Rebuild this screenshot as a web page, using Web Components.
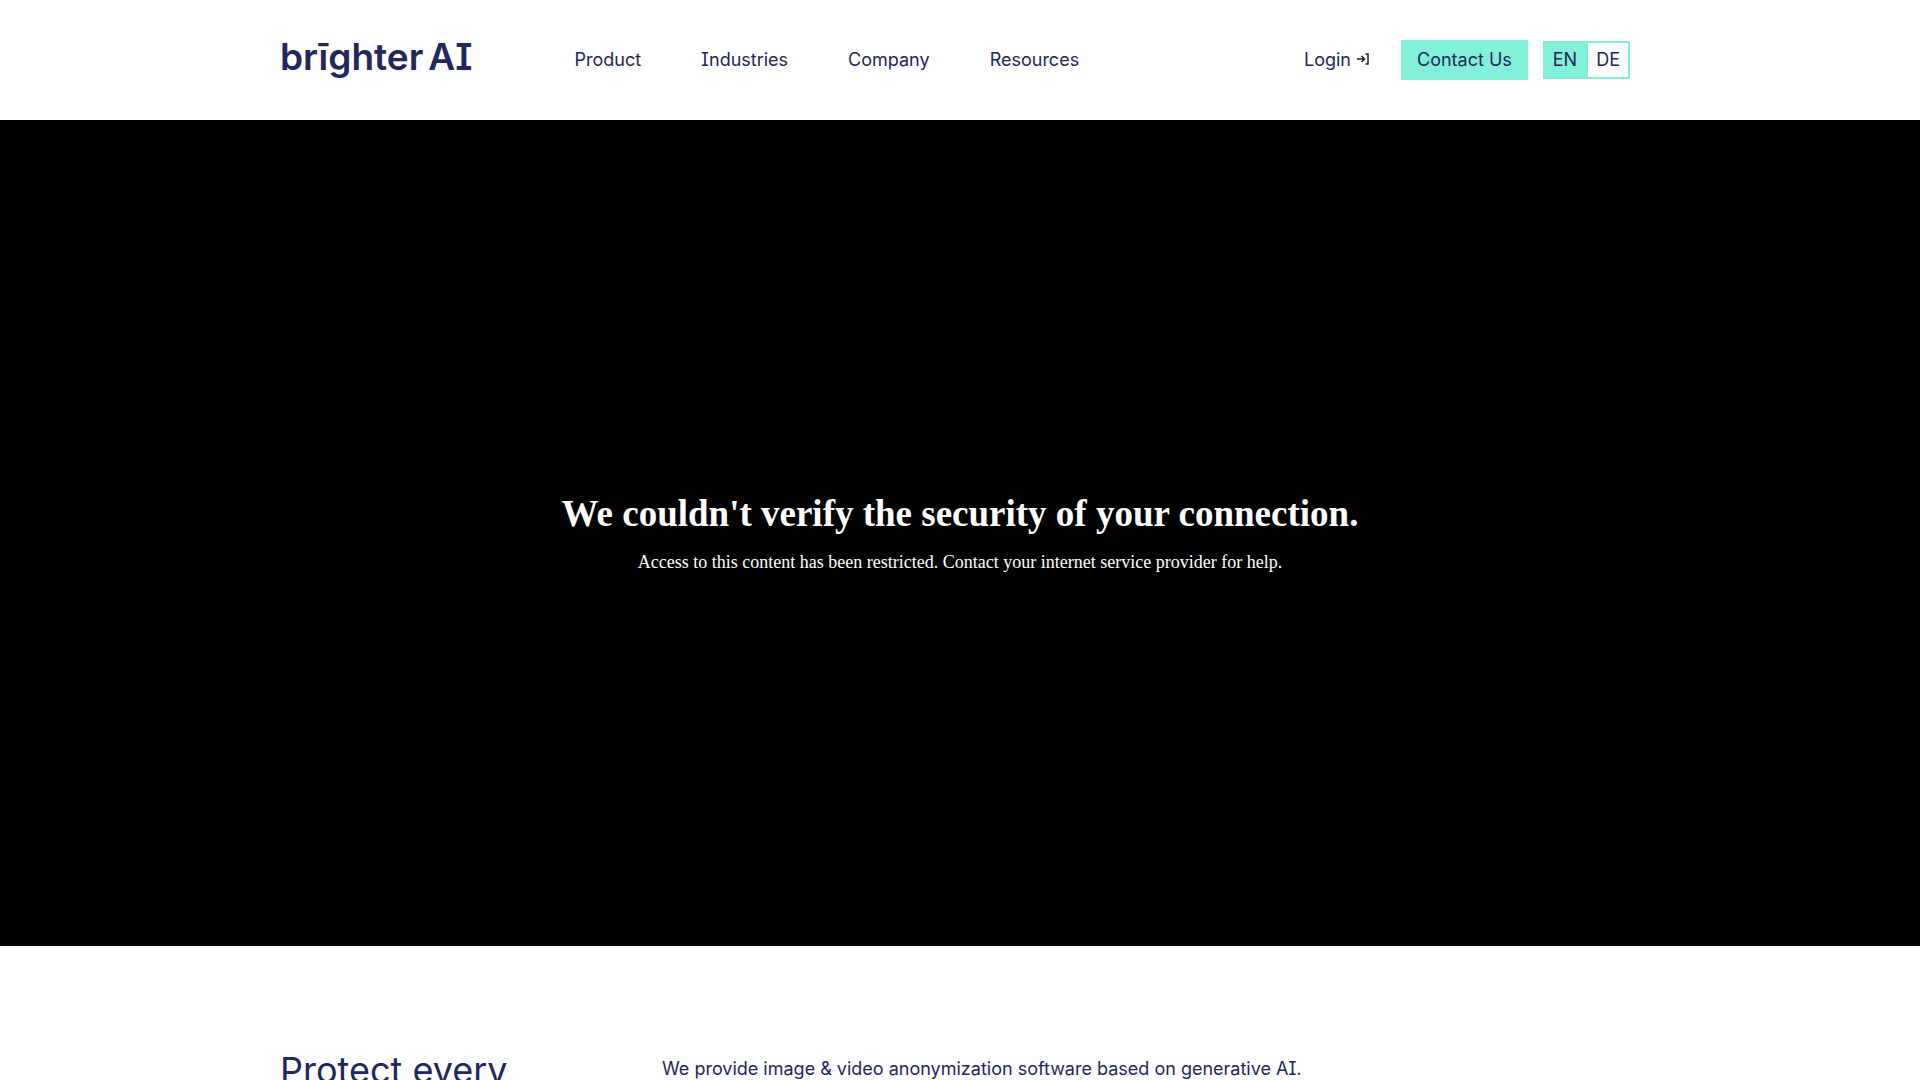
<!DOCTYPE html>
<html lang="en">
<head>
    <meta charset="utf-8">
    <meta name="viewport" content="width=device-width, initial-scale=1">
    <title>brighter AI</title>
    <style>
        :root {
            --navy: #22265b;
            --mint: #82f0d8;
            --gutter: 280px;
        }

        body {
            margin: 0;
            height: 100vh;
            overflow: hidden;
            background: #fff;
            color: var(--navy);
            font-family: Inter, "Liberation Sans", sans-serif;
            font-size: 18px;
            line-height: 24px;
            font-feature-settings: "cv08";
        }
    </style>
</head>
<body>
    <site-header>
        <brand-logo slot="logo"></brand-logo>
        <nav-link slot="nav" href="#product">Product</nav-link>
        <nav-link slot="nav" href="#industries">Industries</nav-link>
        <nav-link slot="nav" href="#company">Company</nav-link>
        <nav-link slot="nav" href="#resources">Resources</nav-link>
        <login-link slot="actions"></login-link>
        <contact-button slot="actions">Contact Us</contact-button>
        <language-switch slot="actions" current="EN"></language-switch>
    </site-header>
    <main>
        <video-notice>
            <span slot="title">We couldn't verify the security of your connection.</span>
            <span slot="text">Access to this content has been restricted. Contact your internet service provider for help.</span>
        </video-notice>
        <intro-section>
            <span slot="title">Protect every</span>
            <span slot="text">We provide image &amp; video anonymization software based on generative AI.</span>
        </intro-section>
    </main>

    <script>
        class SiteHeader extends HTMLElement {
            constructor() {
                super();
                this.attachShadow({ mode: "open" });
                this.shadowRoot.innerHTML = `
                    <style>
                        :host { display: block; }

                        header {
                            display: flex;
                            align-items: center;
                            box-sizing: border-box;
                            min-height: 120px;
                            padding: 0 290px 0 var(--gutter);
                        }

                        nav {
                            display: flex;
                            gap: 60px;
                            margin-left: 102px;
                        }

                        .actions {
                            display: flex;
                            align-items: center;
                            margin-left: auto;
                        }
                    </style>
                    <header>
                        <slot name="logo"></slot>
                        <nav><slot name="nav"></slot></nav>
                        <div class="actions"><slot name="actions"></slot></div>
                    </header>
                `;
            }
        }

        class BrandLogo extends HTMLElement {
            constructor() {
                super();
                this.attachShadow({ mode: "open" });
                this.shadowRoot.innerHTML = `
                    <style>
                        :host { display: block; }

                        a {
                            display: flex;
                            gap: 5px;
                            padding-bottom: 6px;
                            color: inherit;
                            font-size: 37px;
                            font-weight: 600;
                            line-height: 44px;
                            text-decoration: none;
                        }
                    </style>
                    <a href="#"><span>brīghter</span><span>AI</span></a>
                `;
            }
        }

        class NavLink extends HTMLElement {
            constructor() {
                super();
                this.attachShadow({ mode: "open" });
            }

            connectedCallback() {
                this.shadowRoot.innerHTML = `
                    <style>
                        :host { display: block; }
                        a { color: inherit; text-decoration: none; }
                    </style>
                    <a href="${this.getAttribute("href")}"><slot></slot></a>
                `;
            }
        }

        class LoginLink extends HTMLElement {
            constructor() {
                super();
                this.attachShadow({ mode: "open" });
                this.shadowRoot.innerHTML = `
                    <style>
                        :host { display: block; margin-right: 32px; }

                        a {
                            display: flex;
                            align-items: center;
                            gap: 6px;
                            color: inherit;
                            text-decoration: none;
                        }

                        svg { display: block; margin-bottom: 2px; }
                    </style>
                    <a href="#login">
                        Login
                        <svg width="12" height="12" viewBox="0 0 12 12" fill="none" stroke="#222" stroke-width="1.5" aria-hidden="true">
                            <path d="M0 6h7M4.5 3l3 3-3 3"/>
                            <path d="M8.5 1H11v10H8.5"/>
                        </svg>
                    </a>
                `;
            }
        }

        class ContactButton extends HTMLElement {
            constructor() {
                super();
                this.attachShadow({ mode: "open" });
                this.shadowRoot.innerHTML = `
                    <style>
                        :host { display: block; margin-right: 15px; }

                        button {
                            display: block;
                            padding: 8px 16px;
                            border: 0;
                            background: var(--mint);
                            color: inherit;
                            font: inherit;
                            cursor: pointer;
                        }
                    </style>
                    <button type="button"><slot></slot></button>
                `;
            }
        }

        class LanguageSwitch extends HTMLElement {
            constructor() {
                super();
                this.attachShadow({ mode: "open" });
            }

            connectedCallback() {
                const current = this.getAttribute("current");
                const links = ["EN", "DE"].map((lang) => `
                    <a href="#${lang.toLowerCase()}" class="${lang === current ? "active" : ""}">${lang}</a>
                `).join("");

                this.shadowRoot.innerHTML = `
                    <style>
                        :host {
                            display: flex;
                            border: 2px solid var(--mint);
                        }

                        a {
                            padding: 5px 8px;
                            color: inherit;
                            text-decoration: none;
                        }

                        .active { background: var(--mint); padding-right: 11px; }
                    </style>
                    ${links}
                `;
            }
        }

        class VideoNotice extends HTMLElement {
            constructor() {
                super();
                this.attachShadow({ mode: "open" });
                this.shadowRoot.innerHTML = `
                    <style>
                        :host {
                            display: flex;
                            flex-direction: column;
                            align-items: center;
                            justify-content: center;
                            aspect-ratio: 960 / 413;
                            background: #000;
                            color: #fff;
                            font-family: "Liberation Serif", serif;
                            text-align: center;
                        }

                        h1 { margin: 0; font-size: 37px; line-height: 44px; }
                        p { margin: 16px 0 0; padding-bottom: 2px; line-height: 20px; }
                    </style>
                    <h1><slot name="title"></slot></h1>
                    <p><slot name="text"></slot></p>
                `;
            }
        }

        class IntroSection extends HTMLElement {
            constructor() {
                super();
                this.attachShadow({ mode: "open" });
                this.shadowRoot.innerHTML = `
                    <style>
                        :host {
                            display: grid;
                            grid-template-columns: 382px 1fr;
                            padding: 103px var(--gutter) 0;
                        }

                        h2 { margin: 0; font-size: 36px; font-weight: 400; line-height: 42px; }
                        p { margin: 8px 0 0; }
                    </style>
                    <h2><slot name="title"></slot></h2>
                    <p><slot name="text"></slot></p>
                `;
            }
        }

        customElements.define("site-header", SiteHeader);
        customElements.define("brand-logo", BrandLogo);
        customElements.define("nav-link", NavLink);
        customElements.define("login-link", LoginLink);
        customElements.define("contact-button", ContactButton);
        customElements.define("language-switch", LanguageSwitch);
        customElements.define("video-notice", VideoNotice);
        customElements.define("intro-section", IntroSection);
    </script>
</body>
</html>
